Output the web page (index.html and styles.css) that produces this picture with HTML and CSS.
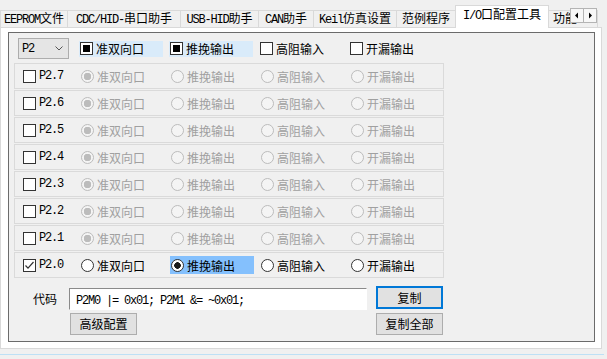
FILE: index.html
```html
<!DOCTYPE html>
<html>
<head>
<meta charset="utf-8">
<link rel="stylesheet" href="styles.css">
</head>
<body>
<div class="tabbar">
  <div class="tabs">
    <div class="tab w1"><span class="lat">EEPROM</span>文件</div>
    <div class="tab w2"><span class="lat">CDC/HID-</span>串口助手</div>
    <div class="tab w3"><span class="lat">USB-HID</span>助手</div>
    <div class="tab w4"><span class="lat">CAN</span>助手</div>
    <div class="tab w5"><span class="lat">Keil</span>仿真设置</div>
    <div class="tab w6">范例程序</div>
    <div class="tab sel"><span class="lat">I/O</span>口配置工具</div>
    <div class="tab w8">功能</div>
  </div>
  <div class="arrows">
    <span class="arr"><svg width="12" height="13" viewBox="0 0 12 13"><polygon points="7,3.5 4,6.5 7,9.5" fill="#000"/></svg></span>
    <span class="arr"><svg width="12" height="13" viewBox="0 0 12 13"><polygon points="5,3.5 8,6.5 5,9.5" fill="#000"/></svg></span>
  </div>
</div>
<div class="page">
  <div class="group">
    <div class="head">
      <div class="combo"><span class="lat">P2</span><svg width="8" height="5" viewBox="0 0 8 5"><polyline points="0.5,0.5 4,4 7.5,0.5" fill="none" stroke="#555" stroke-width="1"/></svg></div>
      <div class="cell first"><span class="opt hl"><span class="cb ind"></span>准双向口</span></div>
      <div class="cell"><span class="opt hl"><span class="cb ind"></span>推挽输出</span></div>
      <div class="cell"><span class="opt"><span class="cb"></span>高阻输入</span></div>
      <div class="cell"><span class="opt"><span class="cb"></span>开漏输出</span></div>
    </div>

    <div class="row dis">
      <div class="pin"><span class="cb"></span><span class="lat">P2.7</span></div>
      <div class="cell"><span class="opt"><span class="rb on"></span>准双向口</span></div>
      <div class="cell"><span class="opt"><span class="rb"></span>推挽输出</span></div>
      <div class="cell"><span class="opt"><span class="rb"></span>高阻输入</span></div>
      <div class="cell"><span class="opt"><span class="rb"></span>开漏输出</span></div>
    </div>
    <div class="row dis">
      <div class="pin"><span class="cb"></span><span class="lat">P2.6</span></div>
      <div class="cell"><span class="opt"><span class="rb on"></span>准双向口</span></div>
      <div class="cell"><span class="opt"><span class="rb"></span>推挽输出</span></div>
      <div class="cell"><span class="opt"><span class="rb"></span>高阻输入</span></div>
      <div class="cell"><span class="opt"><span class="rb"></span>开漏输出</span></div>
    </div>
    <div class="row dis">
      <div class="pin"><span class="cb"></span><span class="lat">P2.5</span></div>
      <div class="cell"><span class="opt"><span class="rb on"></span>准双向口</span></div>
      <div class="cell"><span class="opt"><span class="rb"></span>推挽输出</span></div>
      <div class="cell"><span class="opt"><span class="rb"></span>高阻输入</span></div>
      <div class="cell"><span class="opt"><span class="rb"></span>开漏输出</span></div>
    </div>
    <div class="row dis">
      <div class="pin"><span class="cb"></span><span class="lat">P2.4</span></div>
      <div class="cell"><span class="opt"><span class="rb on"></span>准双向口</span></div>
      <div class="cell"><span class="opt"><span class="rb"></span>推挽输出</span></div>
      <div class="cell"><span class="opt"><span class="rb"></span>高阻输入</span></div>
      <div class="cell"><span class="opt"><span class="rb"></span>开漏输出</span></div>
    </div>
    <div class="row dis">
      <div class="pin"><span class="cb"></span><span class="lat">P2.3</span></div>
      <div class="cell"><span class="opt"><span class="rb on"></span>准双向口</span></div>
      <div class="cell"><span class="opt"><span class="rb"></span>推挽输出</span></div>
      <div class="cell"><span class="opt"><span class="rb"></span>高阻输入</span></div>
      <div class="cell"><span class="opt"><span class="rb"></span>开漏输出</span></div>
    </div>
    <div class="row dis">
      <div class="pin"><span class="cb"></span><span class="lat">P2.2</span></div>
      <div class="cell"><span class="opt"><span class="rb on"></span>准双向口</span></div>
      <div class="cell"><span class="opt"><span class="rb"></span>推挽输出</span></div>
      <div class="cell"><span class="opt"><span class="rb"></span>高阻输入</span></div>
      <div class="cell"><span class="opt"><span class="rb"></span>开漏输出</span></div>
    </div>
    <div class="row dis">
      <div class="pin"><span class="cb"></span><span class="lat">P2.1</span></div>
      <div class="cell"><span class="opt"><span class="rb on"></span>准双向口</span></div>
      <div class="cell"><span class="opt"><span class="rb"></span>推挽输出</span></div>
      <div class="cell"><span class="opt"><span class="rb"></span>高阻输入</span></div>
      <div class="cell"><span class="opt"><span class="rb"></span>开漏输出</span></div>
    </div>
    <div class="row">
      <div class="pin"><span class="cb"><svg width="11" height="11" viewBox="0 0 11 11"><polyline points="1.5,5.5 4,8.2 9.5,2" fill="none" stroke="#333" stroke-width="1.2"/></svg></span><span class="lat">P2.0</span></div>
      <div class="cell"><span class="opt"><span class="rb"></span>准双向口</span></div>
      <div class="cell"><span class="opt sel"><span class="rb on"></span>推挽输出</span></div>
      <div class="cell"><span class="opt"><span class="rb"></span>高阻输入</span></div>
      <div class="cell"><span class="opt"><span class="rb"></span>开漏输出</span></div>
    </div>

    <div class="code">
      <div class="code-a">
        <span class="code-label">代码</span>
        <div class="codebox"><span class="lat">P2M0 |= 0x01; P2M1 &amp;= ~0x01;</span></div>
        <div class="btn focus">复制</div>
      </div>
      <div class="code-b">
        <div class="btn adv">高级配置</div>
        <div class="btn all">复制全部</div>
      </div>
    </div>
  </div>
</div>
<div class="status"></div>
</body>
</html>
```
FILE: styles.css
```css
* { box-sizing: border-box; }
html, body { margin: 0; padding: 0; }
body {
  width: 607px;
  height: 359px;
  overflow: hidden;
  background: #f0f0f0;
  font-family: "Noto Sans CJK SC", "Noto Sans", sans-serif;
  font-size: 12px;
  color: #000;
}
.lat {
  font-family: "Liberation Mono", "Noto Sans CJK SC", monospace;
  font-size: 12px;
  letter-spacing: -1.2px;
  white-space: pre;
}

/* tabs */
.tabbar {
  position: relative;
  z-index: 1;
  width: 598px;
  height: 28px;
  overflow: hidden;
}
.tabs {
  display: flex;
  align-items: flex-end;
  height: 28px;
}
.tab {
  flex: none;
  height: 17px;
  margin-bottom: 1px;
  margin-right: -1px;
  border: 1px solid #d9d9d9;
  border-bottom: none;
  background: #f0f0f0;
  text-align: center;
  line-height: 13px;
  white-space: nowrap;
  overflow: hidden;
}
.w1 { width: 68px; }
.w2 { width: 114px; }
.w3 { width: 79px; }
.w4 { width: 56px; }
.w5 { width: 84px; }
.w6 { width: 60px; }
.w8 { width: 50px; text-align: left; padding-left: 4px; }
.tab.sel {
  position: relative;
  z-index: 2;
  width: 94px;
  height: 23px;
  margin-bottom: 0;
  background: #fff;
  padding-top: 1px;
}
.arrows {
  position: absolute;
  left: 570px;
  top: 8px;
  display: flex;
}
.arr {
  display: flex;
  width: 14px;
  height: 15px;
  margin-right: -1px;
  border: 1px solid #b4b4b4;
  background: #f7f7f7;
  align-items: center;
  justify-content: center;
}

/* page */
.page {
  margin-top: -1px;
  width: 602px;
  height: 322px;
  border: 1px solid #d9d9d9;
  background: #fff;
  padding: 4px 0 0 7px;
}
.group {
  width: 587px;
  height: 310px;
  border: 1px solid #6b6b6b;
  background: #f0f0f0;
  padding: 5px 0 0 5px;
}

/* header */
.head {
  display: flex;
  align-items: center;
  height: 21px;
  margin: 0 0 4px 4px;
}
.combo {
  display: flex;
  align-items: center;
  justify-content: space-between;
  width: 51px;
  height: 21px;
  border: 1px solid #adadad;
  background: #e5e5e5;
  padding: 0 5px 0 3px;
}
.cell {
  flex: none;
  width: 90px;
  display: flex;
  align-items: center;
}
.cell.first { margin-left: 10px; }
.opt {
  display: inline-flex;
  align-items: center;
  gap: 3px;
  width: 84px;
  height: 16px;
  padding-left: 1px;
  white-space: nowrap;
}
.opt.hl { background: #d9ebfa; }

.cb {
  flex: none;
  display: flex;
  align-items: center;
  justify-content: center;
  width: 13px;
  height: 13px;
  border: 1px solid #333;
  background: #fff;
}
.cb.ind {
  background: #000;
  box-shadow: inset 0 0 0 2px #fff;
}
.rb {
  flex: none;
  width: 13px;
  height: 13px;
  border: 1px solid #333;
  border-radius: 50%;
  background: #fff;
}
.rb.on {
  background: radial-gradient(circle, #1a1a1a 0 3px, #fff 3.6px);
}

/* rows */
.row {
  display: flex;
  align-items: center;
  width: 430px;
  height: 26px;
  margin-bottom: 1px;
  border: 1px solid #dadada;
  padding-left: 8px;
}
.pin {
  flex: none;
  width: 57px;
  display: flex;
  align-items: center;
  gap: 3px;
}
.row .opt { height: 18px; }
.opt.sel { background: #84c0fd; }
.row.dis .opt { color: #a0a0a0; }
.row.dis .rb {
  border-color: #bcbcbc;
  background: #f4f4f4;
}
.row.dis .rb.on {
  background: radial-gradient(circle, #bcbcbc 0 3.5px, #f4f4f4 4px);
}

/* code area */
.code { margin-top: 8px; }
.code-a {
  display: flex;
  align-items: flex-start;
}
.code-label {
  width: 55px;
  padding-left: 19px;
  margin-top: 2px;
  line-height: 21px;
}
.codebox {
  width: 298px;
  height: 22px;
  margin-top: 2px;
  border: 1px solid;
  border-color: #8a8a8a #fff #fff #8a8a8a;
  background: #fff;
  padding-left: 6px;
  line-height: 20px;
}
.btn {
  flex: none;
  width: 67px;
  height: 22px;
  border: 1px solid #adadad;
  background: #e1e1e1;
  text-align: center;
  line-height: 20px;
}
.btn.focus {
  margin-left: 9px;
  height: 23px;
  border: 2px solid #0078d7;
  line-height: 19px;
}
.code-b {
  display: flex;
  margin-top: 3px;
}
.btn.adv { margin-left: 56px; }
.btn.all { margin-left: 239px; }

.status {
  margin-top: 5px;
  width: 604px;
  height: 1px;
  background: #bde0f5;
}
```
